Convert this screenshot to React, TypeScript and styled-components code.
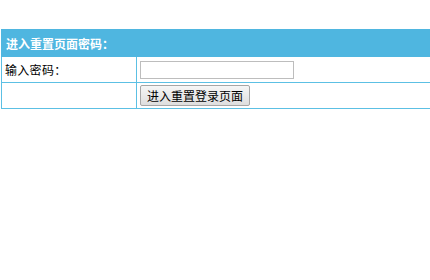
import styled, { createGlobalStyle } from "styled-components";

const GlobalStyle = createGlobalStyle`
body{
  margin: 0;
  background: #fff;
  font-family: "Liberation Sans", "Noto Sans CJK SC", sans-serif;
  font-size: 12px;
  color: #000;
}
`;

const Wrapper = styled.div`
  padding: 29px 0 0 1px;
`;

const Table = styled.table`
  width: 440px;
  border-collapse: collapse;
`;

const HeadCell = styled.th`
  background: #4fb6e0;
  color: #fff;
  font-weight: bold;
  text-align: left;
  height: 26px;
  padding: 0 0 0 4px;
  border: 1px solid #4fb6e0;
`;

const Cell = styled.td<{ $first?: boolean }>`
  border: 1px solid #5cc0e4;
  height: ${(p) => (p.$first ? "24px" : "25px")};
  padding: 0 3px;
  width: ${(p) => (p.$first ? "128px" : "auto")};
`;

const Input = styled.input`
  display: block;
  width: 148px;
  height: 14px;
  border: 1px solid #bdbdbd;
  padding: 1px 2px;
  margin: 0;
`;

const Button = styled.button`
  display: block;
  margin: 0;
  height: 21px;
  padding: 0 6px;
  font-family: "Liberation Sans", "Noto Sans CJK SC", sans-serif;
  font-size: 12px;
  background: linear-gradient(#f6f6f6, #dedede);
  border: 1px solid #a6a6a6;
  border-radius: 2px;
  color: #000;
`;

const Label = styled.span`
  letter-spacing: 0.3px;
`;

function App() {
  return (
    <>
      <GlobalStyle />
      <Wrapper>
        <Table>
          <thead>
            <tr>
              <HeadCell colSpan={2}>进入重置页面密码：</HeadCell>
            </tr>
          </thead>
          <tbody>
            <tr>
              <Cell $first>
                <Label>输入密码：</Label>
              </Cell>
              <Cell>
                <Input type="password" />
              </Cell>
            </tr>
            <tr>
              <Cell $first></Cell>
              <Cell>
                <Button>进入重置登录页面</Button>
              </Cell>
            </tr>
          </tbody>
        </Table>
      </Wrapper>
    </>
  );
}

export default App;
